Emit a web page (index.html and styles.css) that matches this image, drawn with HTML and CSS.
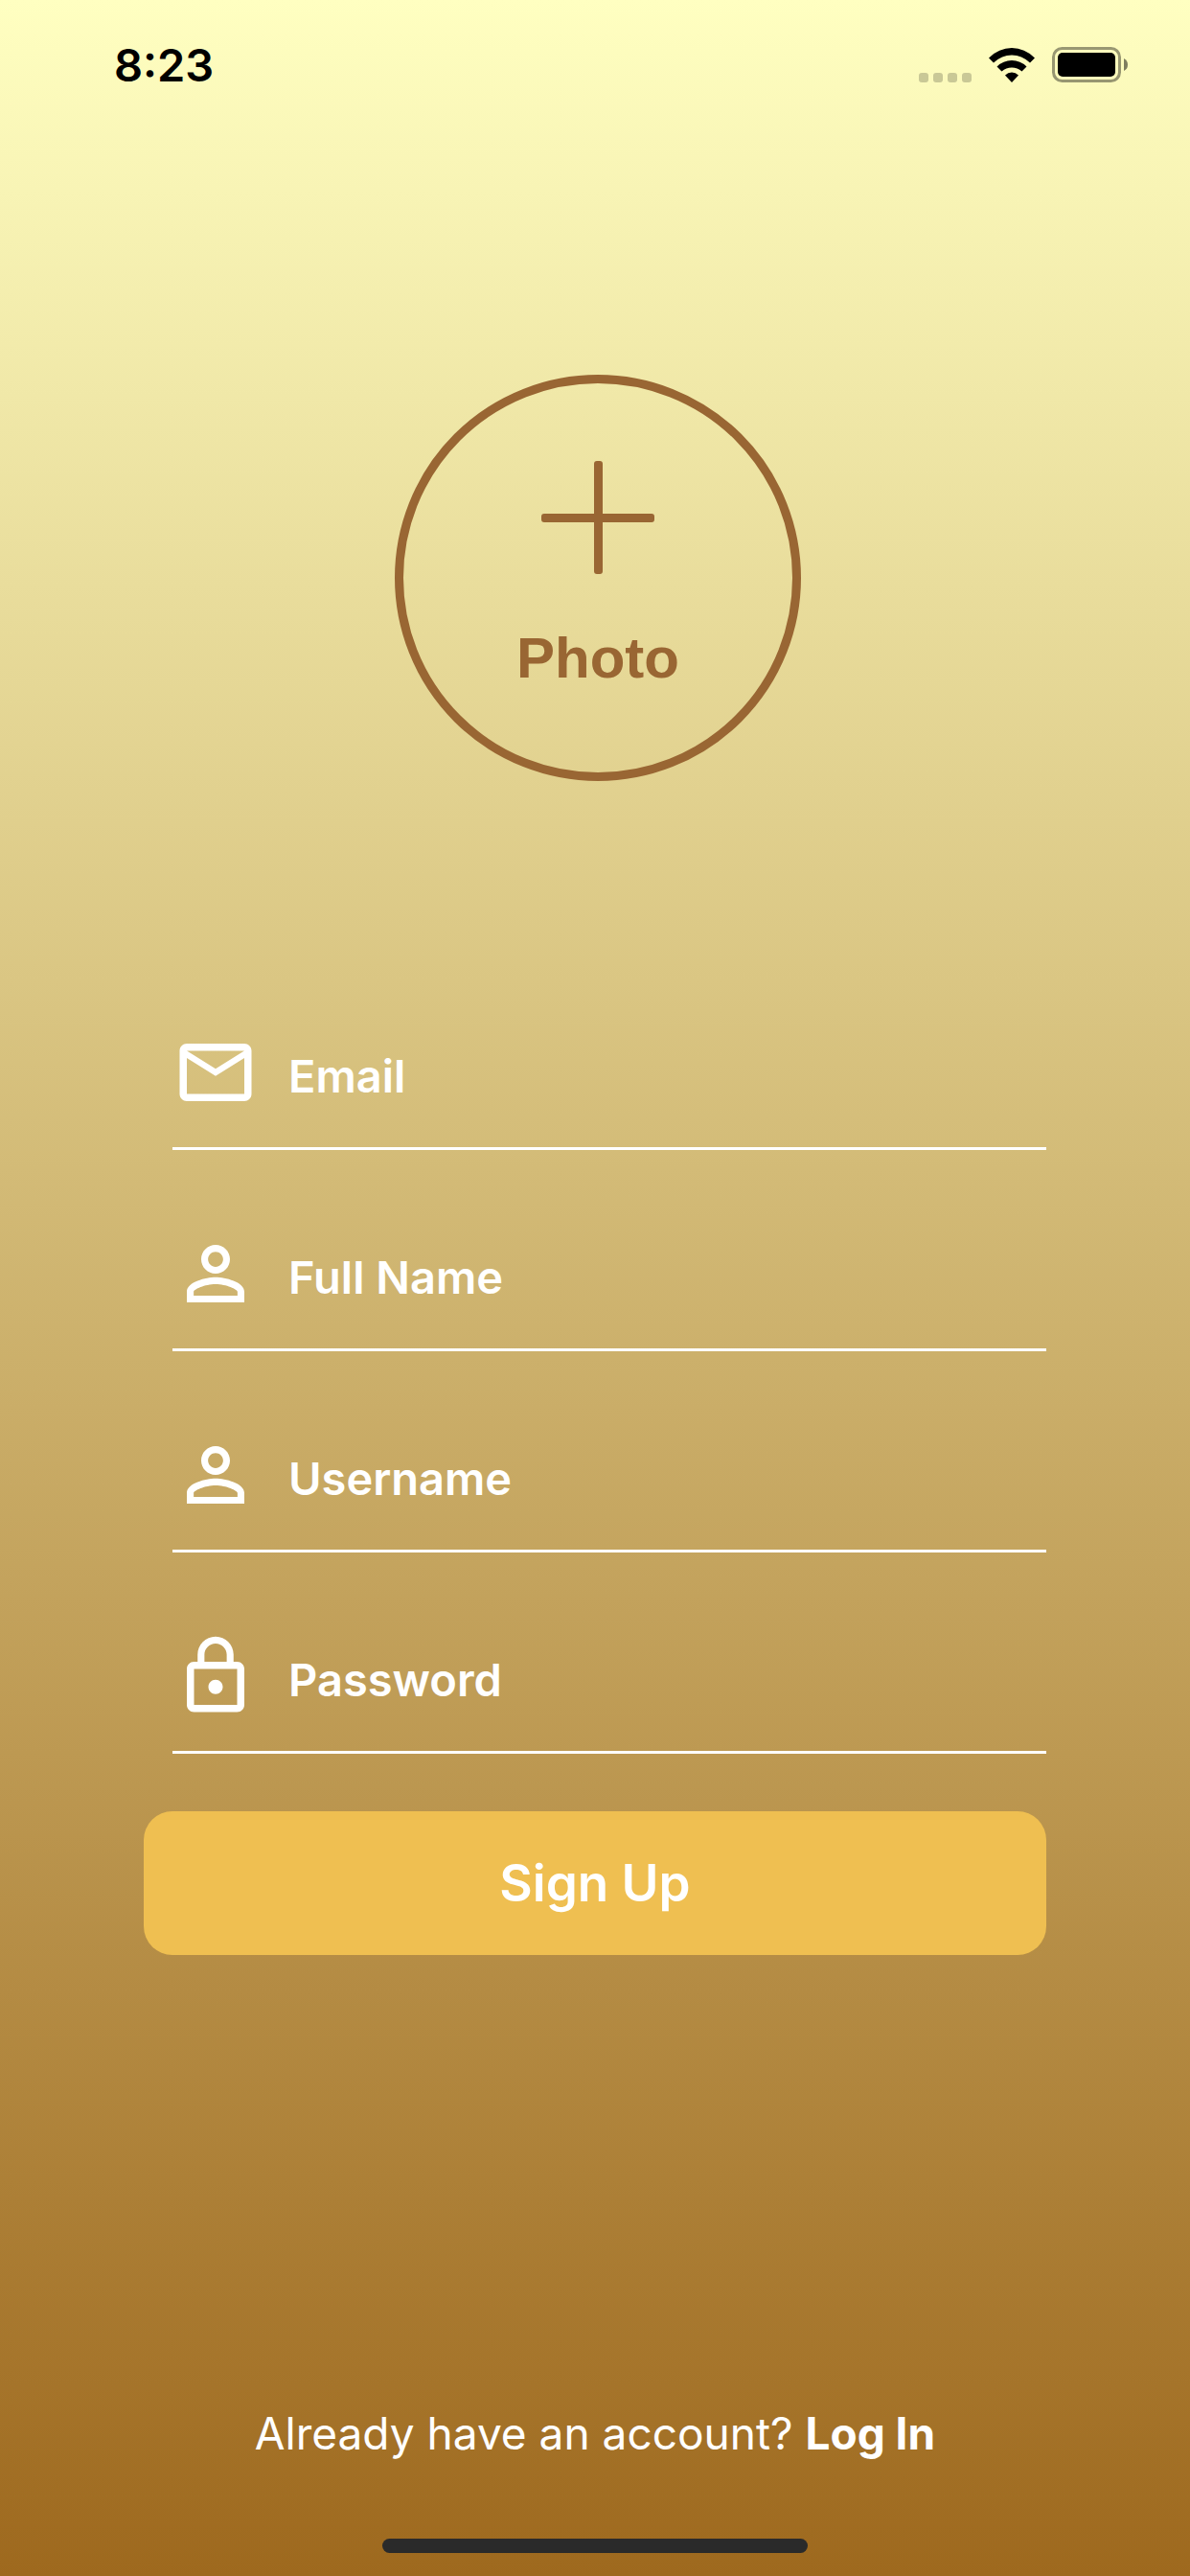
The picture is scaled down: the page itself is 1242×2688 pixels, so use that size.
FILE: index.html
```html
<!DOCTYPE html>
<html lang="en">
<head>
<meta charset="utf-8">
<meta name="viewport" content="width=device-width, initial-scale=1">
<title>Sign Up</title>
<link rel="stylesheet" href="styles.css">
</head>
<body>
<header class="status">
  <span class="time">8:23</span>
  <div class="indicators">
    <span class="signal"><i></i><i></i><i></i><i></i></span>
    <svg class="wifi" viewBox="0 0 48 36" aria-hidden="true">
      <path d="M0 10.500Q10.500 0 24 0T48 10.500L43 15.500Q34.500 7.500 24 7.500T5 15.500Z"/>
      <path d="M8.500 19.500Q15 13 24 13T39.500 19.500L34.500 24.500Q30 20.500 24 20.500T13.500 24.500Z"/>
      <path d="M17 28.500Q20 25.500 24 25.500T31 28.500L24 36Z"/>
    </svg>
    <svg class="battery" viewBox="0 0 80 37" aria-hidden="true">
      <rect x="1.500" y="1.500" width="69" height="34" rx="9" fill="none" stroke="#000" stroke-opacity=".4" stroke-width="3"/>
      <rect x="6" y="6" width="60" height="25" rx="5"/>
      <path d="M75 12q4 2 4 6.500t-4 6.500z" fill-opacity=".5"/>
    </svg>
  </div>
</header>
<main class="content">
  <button class="photo" type="button">
    <svg class="plus" viewBox="0 0 120 120" aria-hidden="true">
      <rect x="1" y="55" width="118" height="9" rx="3"/>
      <rect x="56" y="0" width="9" height="118" rx="3"/>
    </svg>
    <span>Photo</span>
  </button>
  <form class="form">
    <div class="field">
      <label for="email" aria-label="Email"><svg class="icon" viewBox="0 0 24 24"><path d="M22 6c0-1.100-.9-2-2-2H4c-1.100 0-2 .9-2 2v12c0 1.100.9 2 2 2h16c1.100 0 2-.9 2-2V6zm-2 0l-8 5-8-5h16zm0 12H4V8l8 5 8-5v10z"/></svg></label>
      <input id="email" type="email" placeholder="Email">
    </div>
    <div class="field">
      <label for="fullname" aria-label="Full Name"><svg class="icon" viewBox="0 0 24 24"><path d="M12 5.900c1.160 0 2.100.94 2.100 2.100s-.94 2.100-2.100 2.100S9.900 9.160 9.900 8s.94-2.100 2.100-2.100m0 9c2.970 0 6.100 1.460 6.100 2.100v1.100H5.900V17c0-.64 3.130-2.100 6.100-2.100M12 4C9.790 4 8 5.790 8 8s1.790 4 4 4 4-1.790 4-4-1.790-4-4-4zm0 9c-2.670 0-8 1.340-8 4v3h16v-3c0-2.660-5.330-4-8-4z"/></svg></label>
      <input id="fullname" type="text" placeholder="Full Name">
    </div>
    <div class="field">
      <label for="username" aria-label="Username"><svg class="icon" viewBox="0 0 24 24"><path d="M12 5.900c1.160 0 2.100.94 2.100 2.100s-.94 2.100-2.100 2.100S9.900 9.160 9.900 8s.94-2.100 2.100-2.100m0 9c2.970 0 6.100 1.460 6.100 2.100v1.100H5.900V17c0-.64 3.130-2.100 6.100-2.100M12 4C9.790 4 8 5.790 8 8s1.790 4 4 4 4-1.790 4-4-1.790-4-4-4zm0 9c-2.670 0-8 1.340-8 4v3h16v-3c0-2.660-5.330-4-8-4z"/></svg></label>
      <input id="username" type="text" placeholder="Username">
    </div>
    <div class="field">
      <label for="password" aria-label="Password"><svg class="icon" viewBox="0 0 24 24"><path d="M12 17c1.100 0 2-.9 2-2s-.9-2-2-2-2 .9-2 2 .9 2 2 2zm6-9h-1V6c0-2.760-2.240-5-5-5S7 3.240 7 6v2H6c-1.100 0-2 .9-2 2v10c0 1.100.9 2 2 2h12c1.100 0 2-.9 2-2V10c0-1.100-.9-2-2-2zM8.900 6c0-1.710 1.390-3.100 3.100-3.100s3.100 1.390 3.100 3.100v2H8.900V6zM18 20H6V10h12v10z"/></svg></label>
      <input id="password" type="password" placeholder="Password">
    </div>
    <button class="submit" type="submit">Sign Up</button>
  </form>
</main>
<footer class="footer">
  <p>Already have an account? <a href="#login">Log In</a></p>
  <div class="home"></div>
</footer>
</body>
</html>
```
FILE: styles.css
```css
* {
  box-sizing: border-box;
}

body {
  margin: 0;
  min-height: 100vh;
  display: flex;
  flex-direction: column;
  font-family: Inter, "Liberation Sans", sans-serif;
  color: #fff;
  background: linear-gradient(#ffffc1, #9e691e);
}

button,
input {
  font: inherit;
  color: inherit;
  border: 0;
  padding: 0;
  background: none;
}

.status {
  display: flex;
  justify-content: space-between;
  align-items: center;
  height: 135px;
  padding: 0 64px 0 119px;
  color: #000;
}

.time {
  font-size: 47px;
  font-weight: 600;
}

.indicators {
  display: flex;
  align-items: flex-end;
  gap: 18px;
}

.signal {
  display: flex;
  gap: 5px;
}

.signal i {
  width: 10px;
  height: 10px;
  border-radius: 3px;
  background: rgba(0, 0, 0, .2);
}

.wifi {
  width: 48px;
  height: 36px;
}

.battery {
  width: 80px;
  height: 37px;
}

.content {
  display: flex;
  flex-direction: column;
  padding: 256px 150px 0;
}

.photo {
  display: flex;
  flex-direction: column;
  align-items: center;
  align-self: center;
  gap: 26px;
  width: 424px;
  height: 424px;
  margin-left: 6px;
  padding-top: 81px;
  border: 9px solid #996633;
  border-radius: 50%;
  color: #996633;
  font: bold 60px/1 "Liberation Sans", sans-serif;
}

.photo span {
  line-height: 120px;
}

.plus {
  width: 120px;
  height: 120px;
  fill: currentColor;
}

.form {
  display: flex;
  flex-direction: column;
  gap: 84px;
  margin-top: 259px;
}

.field {
  display: flex;
  gap: 31px;
  height: 126px;
  margin-left: 30px;
  border-bottom: 3px solid #fff;
}

.icon {
  display: block;
  width: 90px;
  height: 90px;
  fill: #fff;
}

.field input {
  flex: 1;
  min-width: 0;
  height: 96px;
  outline: 0;
  font-size: 47px;
  font-weight: 600;
}

.field input::placeholder {
  color: #fff;
  opacity: 1;
}

.submit {
  height: 150px;
  margin-top: -24px;
  border-radius: 30px;
  background: #efbf51;
  font-size: 53px;
  font-weight: 600;
}

.footer {
  display: flex;
  flex-direction: column;
  align-items: center;
  gap: 80px;
  margin-top: auto;
  padding-bottom: 24px;
}

.footer p {
  margin: 0;
  font-size: 46px;
  line-height: 60px;
}

.footer a {
  color: inherit;
  font-weight: 700;
  text-decoration: none;
}

.home {
  width: 444px;
  height: 15px;
  border-radius: 8px;
  background: #2a2a2a;
}
```
